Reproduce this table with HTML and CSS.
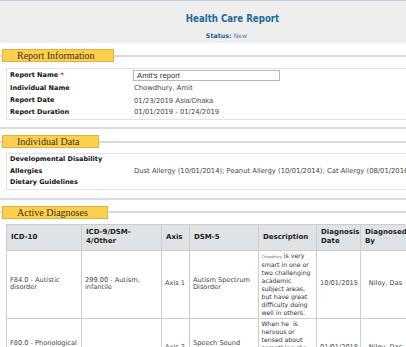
FILE: index.html
```html
<!DOCTYPE html>
<html lang="en">
<head>
    <meta charset="UTF-8">
    <title>Health Care Report</title>
    <link rel="stylesheet" href="styles.css">
</head>
<body>
<div class="page">
    <header class="report-header">
        <h1>Health Care Report</h1>
        <div class="status"><b>Status:</b> New</div>
    </header>

    <!-- Report info -->
    <section class="section">
        <div class="legend"><span>Report Information</span></div>
        <div class="info-box">
            <div class="info-row first">
                <div class="label">Report Name <span class="req">*</span></div>
                <div class="value"><input type="text" class="name-input" value="Amit's report"></div>
            </div>
            <div class="info-row">
                <div class="label">Individual Name</div>
                <div class="value">Chowdhury, Amit</div>
            </div>
            <div class="info-row">
                <div class="label">Report Date</div>
                <div class="value">01/23/2019 <span class="tz">Asia/Dhaka</span></div>
            </div>
            <div class="info-row">
                <div class="label">Report Duration</div>
                <div class="value">01/01/2019 - 01/24/2019</div>
            </div>
        </div>
    </section>
    <hr class="divider">

    <!-- Individual data -->
    <section class="section">
        <div class="legend"><span>Individual Data</span></div>
        <div class="info-box tall">
            <div class="info-row">
                <div class="label">Developmental Disability</div>
                <div class="value"></div>
            </div>
            <div class="info-row">
                <div class="label">Allergies</div>
                <div class="value">Dust Allergy (10/01/2014); Peanut Allergy (10/01/2014); Cat Allergy (08/01/2016)</div>
            </div>
            <div class="info-row">
                <div class="label">Dietary Guidelines</div>
                <div class="value"></div>
            </div>
        </div>
    </section>
    <hr class="divider">

    <!-- Diagnoses -->
    <section class="section">
        <div class="legend"><span>Active Diagnoses</span></div>
        <table class="diagnoses">
            <colgroup>
                <col style="width:75px">
                <col style="width:80px">
                <col style="width:28px">
                <col style="width:69px">
                <col style="width:58px">
                <col style="width:44px">
                <col style="width:49px">
            </colgroup>
            <thead>
                <tr>
                    <th>ICD-10</th>
                    <th>ICD-9/DSM-4/Other</th>
                    <th>Axis</th>
                    <th>DSM-5</th>
                    <th>Description</th>
                    <th>Diagnosis Date</th>
                    <th>Diagnosed By</th>
                </tr>
            </thead>
            <tbody>
                <tr>
                    <td>F84.0 - Autistic disorder</td>
                    <td>299.00 - Autism, infantile</td>
                    <td>Axis 1</td>
                    <td>Autism Spectrum Disorder</td>
                    <td class="desc"><span class="mention">Chowdhury</span> is very<br>smart in one or<br>two challenging<br>academic<br>subject areas,<br>but have great<br>difficulty doing<br>well in others.</td>
                    <td class="center">10/01/2015</td>
                    <td class="center">Niloy, Das</td>
                </tr>
                <tr>
                    <td>F80.0 - Phonological disorder</td>
                    <td></td>
                    <td>Axis 2</td>
                    <td>Speech Sound Disorder</td>
                    <td class="desc">When he&nbsp; is<br>nervous or<br>tensed about<br>something she<br>starts to<br>stammer while<br>speaking.</td>
                    <td class="center">01/01/2018</td>
                    <td class="center">Niloy, Das</td>
                </tr>
            </tbody>
        </table>
    </section>
</div>
</body>
</html>
```

FILE: styles.css
```css
html, body {
    margin: 0;
    padding: 0;
    height: 100%;
    overflow: hidden;
}

body {
    background: #fff;
    font-family: "DejaVu Sans", Verdana, sans-serif;
    font-size: 6.8px;
    color: #444;
}

.page {
    width: 465px;
}

/* Top title bar */
.report-header {
    border-top: 1px solid #c3ccd6;
    background: #eeeeee;
    padding: 12px 0 3px;
    text-align: center;
}

.report-header h1 {
    margin: 0;
    font-family: "DejaVu Sans Condensed", "DejaVu Sans", sans-serif;
    font-size: 9.6px;
    line-height: 12px;
    color: #1f6a9a;
}

.status {
    margin-top: 7px;
    padding-right: 12px;
    line-height: 8px;
    font-size: 6.3px;
    color: #5a7fae;
}

.status b {
    color: #2a5f8f;
}

/* Yellow section tabs */
.legend {
    display: flex;
    align-items: center;
    margin-top: 6px;
}

.legend::before {
    content: "";
    width: 2px;
    height: 2px;
    background: #dadada;
}

.legend::after {
    content: "";
    flex: 1;
    height: 2px;
    background: #dadada;
}

.legend span {
    font-family: "Liberation Serif", serif;
    font-size: 10px;
    line-height: 11px;
    color: #3b3222;
    background: #fdcf4f;
    border: 1px solid #e2b23a;
    padding: 0 19px 0 14px;
}

/* Label / value boxes */
.info-box {
    margin: 6px 0 0 6px;
    border: 1px solid #e3e3e3;
    padding: 0 3px;
}

.info-box.tall {
    margin-top: 5px;
}

.info-row {
    display: grid;
    grid-template-columns: 124px 1fr;
    line-height: 11.5px;
}

.info-box.tall .info-row {
    line-height: 11.7px;
}

.info-row.first {
    line-height: 12px;
    margin-bottom: 2px;
}

.label {
    font-weight: bold;
    font-size: 6.5px;
    color: #111;
}

.req {
    color: #d01010;
}

.value {
    white-space: nowrap;
}

.tz {
    font-family: "Liberation Sans", Arial, sans-serif;
    font-size: 7.4px;
    color: #555;
}

.name-input {
    box-sizing: border-box;
    width: 147px;
    height: 11px;
    margin: 0 0 0 -1px;
    padding: 0 3px;
    border: 1px solid #b9b9b9;
    font-family: "Liberation Sans", Arial, sans-serif;
    font-size: 7.7px;
    color: #333;
    vertical-align: middle;
}

.divider {
    margin: 7.5px 0 0;
    height: 0;
    border: 0;
    border-top: 2px solid #dcdcdc;
}

/* Diagnoses table */
.diagnoses {
    margin: 5px 0 0 6px;
    border-collapse: collapse;
    table-layout: fixed;
    width: 403px;
}

.diagnoses th,
.diagnoses td {
    border: 1px solid #cdcdcd;
}

.diagnoses th {
    height: 25px;
    padding: 0 5px 0 4px;
    background: #dfe3e6;
    font-size: 7px;
    line-height: 9px;
    color: #222;
    text-align: left;
    vertical-align: middle;
}

.diagnoses td {
    padding: 1px 2px 1px 3px;
    font-size: 6.6px;
    line-height: 7.6px;
    vertical-align: middle;
}

.diagnoses td.desc {
    padding: 1px 2px 1px 2.5px;
    font-size: 6.2px;
    line-height: 8px;
    color: #333;
    white-space: nowrap;
}

.diagnoses td.center {
    text-align: center;
}

.mention {
    font-size: 3.6px;
    color: #8a4f86;
}
```
